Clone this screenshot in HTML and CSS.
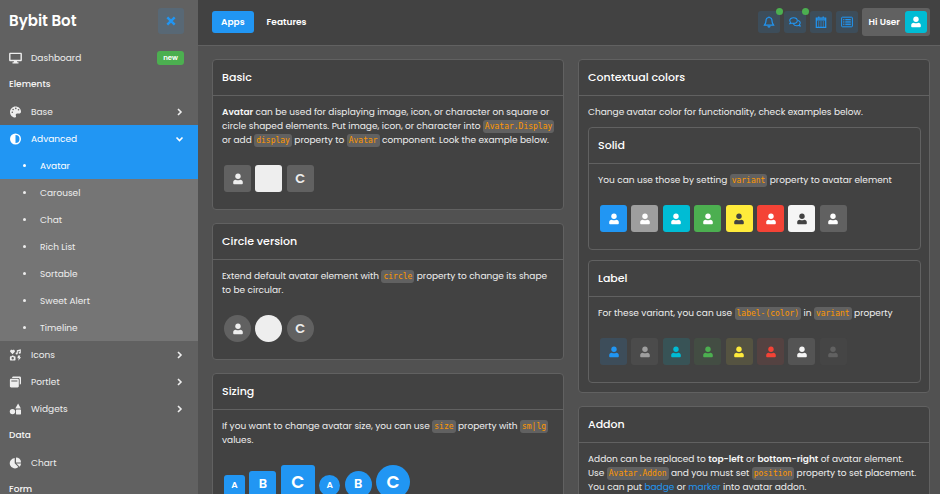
FILE: index.html
```html
<!DOCTYPE html>
<html lang="en">
<head>
    <meta charset="UTF-8">
    <meta name="viewport" content="width=device-width, initial-scale=1.0">
    <title>Bybit Bot - Avatar</title>
    <link rel="stylesheet" href="styles.css">
</head>
<body>

    <!-- Icon shapes shared by the whole page -->
    <svg class="icon-defs" aria-hidden="true">
        <symbol id="i-user" viewBox="0 0 12 12">
            <circle cx="6" cy="3.2" r="2.700"/>
            <path d="M3.800 6.700c.7.400 1.400.500 2.200.500s1.500-.1 2.200-.5c1.600 0 2.600 1.100 2.600 2.600v.9c0 .7-.5 1.100-1.100 1.100H2.300c-.6 0-1.100-.4-1.100-1.100v-.9c0-1.500 1-2.600 2.600-2.600z"/>
        </symbol>
        <symbol id="i-close" viewBox="0 0 12 12">
            <path d="M2.300 2.300l7.400 7.400M9.700 2.300l-7.400 7.400" fill="none" stroke="currentColor" stroke-width="2.400"/>
        </symbol>
        <symbol id="i-right" viewBox="0 0 12 12">
            <path d="M4.500 3L7.500 6l-3 3" fill="none" stroke="currentColor" stroke-width="1.600"/>
        </symbol>
        <symbol id="i-down" viewBox="0 0 12 12">
            <path d="M3 4.500L6 7.500l3-3" fill="none" stroke="currentColor" stroke-width="1.600"/>
        </symbol>
        <symbol id="i-desktop" viewBox="0 0 13 12">
            <path d="M1.400.7h10.200c.8 0 1.300.5 1.300 1.300v6c0 .8-.5 1.300-1.300 1.300H8l.3 1h1.200v1.200h-6v-1.200h1.200l.3-1H1.400C.6 9.300.1 8.800.1 8V2C.1 1.200.6.7 1.400.7zM1.500 2.100v5.700h10V2.100z" fill-rule="evenodd"/>
        </symbol>
        <symbol id="i-palette" viewBox="0 0 12 12">
            <path d="M6 .5C2.900.500.5 3 .5 6s2.300 5.500 5 5.500c1 0 1.300-.9.900-1.700-.5-1.100.1-2.200 1.300-2.200h1.900c1.100 0 1.900-.8 1.900-1.900C11.500 2.700 9 .5 6 .5zM2.800 7a.8.8 0 1 1 0-1.600.8.8 0 0 1 0 1.600zm.8-2.700a.8.8 0 1 1 0-1.600.8.8 0 0 1 0 1.600zm2.700-1.100a.8.8 0 1 1 0-1.600.8.8 0 0 1 0 1.600zM9 4.500a.8.8 0 1 1 0-1.600.8.8 0 0 1 0 1.600z" fill-rule="evenodd"/>
        </symbol>
        <symbol id="i-adjust" viewBox="0 0 12 12">
            <path d="M6 .5a5.500 5.500 0 1 1 0 11 5.500 5.500 0 0 1 0-11zM6 2v8a4 4 0 0 0 0-8z" fill-rule="evenodd"/>
        </symbol>
        <symbol id="i-icons" viewBox="0 0 12 12">
            <path d="M3 5.200L.9 3.100C-.2 1.700 1.700-.2 3 1.200 4.300-.2 6.200 1.700 5.100 3.100z"/>
            <path d="M7.300 1.200l4-.9v3.500a1.100 1 0 1 1-1-1V2l-2 .5v2.100a1.100 1 0 1 1-1-1z"/>
            <path d="M1 7.300h1.100l.4-.7h1.400l.4.7h1.100c.4 0 .6.2.6.6v2.900c0 .4-.2.6-.6.600H1c-.4 0-.6-.2-.6-.6V7.900c0-.4.200-.6.600-.6zm2.200.8a1.200 1.200 0 1 0 0 2.400 1.200 1.200 0 0 0 0-2.400z" fill-rule="evenodd"/>
            <path d="M8.500 6.500h2.300l-.6 1.700h1.400L8.700 11.800l.6-2.500H7.900z"/>
        </symbol>
        <symbol id="i-portlet" viewBox="0 0 12 12">
            <path d="M3.800.5h6.400c.7 0 1.300.6 1.300 1.300v5.400c0 .8-.6 1.300-1.300 1.300V3.300c0-.8-.6-1.400-1.400-1.400H2.600C2.600 1.100 3.100.5 3.800.5z"/>
            <path d="M1.600 2.700h6.500c.7 0 1.200.5 1.200 1.200v6.400c0 .7-.5 1.200-1.200 1.200H1.600c-.7 0-1.200-.5-1.200-1.200V3.900c0-.7.5-1.200 1.200-1.200zm.2 1.700v1.200h6.100V4.400z" fill-rule="evenodd"/>
        </symbol>
        <symbol id="i-shapes" viewBox="0 0 12 12">
            <path d="M8.600.4l2.800 5.100H5.800z"/>
            <circle cx="3" cy="8.600" r="2.700"/>
            <rect x="6.500" y="6.400" width="5" height="5" rx=".6"/>
        </symbol>
        <symbol id="i-pie" viewBox="0 0 12 12">
            <path d="M5.200 1v5.300l3.700 3.800A5.200 5.200 0 1 1 5.200 1z"/>
            <path d="M6.500.4a5 5 0 0 1 5 5h-5z"/>
            <path d="M6.900 6.600h4.700a5 5 0 0 1-1.500 3.200z"/>
        </symbol>
        <symbol id="i-bell" viewBox="0 0 12 12">
            <path d="M6 .4v1M6 1.500C4 1.500 3 3 3 4.800 3 7.200 2 8 1.400 9.100h9.200C10 8 9 7.200 9 4.800 9 3 8 1.500 6 1.500zM4.900 10.200c.2 1.100 2 1.100 2.200 0" fill="none" stroke="currentColor" stroke-width="1.200"/>
        </symbol>
        <symbol id="i-comments" viewBox="0 0 14 12">
            <path d="M5.300 1C2.800 1 .9 2.400.9 4.300c0 .8.400 1.500.9 2L.9 8c.9 0 1.700-.3 2.300-.7.6.200 1.300.3 2.100.3 2.500 0 4.400-1.400 4.400-3.300S7.800 1 5.300 1z" fill="none" stroke="currentColor" stroke-width="1.200"/>
            <path d="M10.600 4.300c1.500.4 2.500 1.400 2.500 2.700 0 .8-.4 1.400-.9 1.900l.9 1.700c-.9 0-1.700-.2-2.300-.6-2.300.6-4.700-.1-5.600-1.800" fill="none" stroke="currentColor" stroke-width="1.200"/>
        </symbol>
        <symbol id="i-calendar" viewBox="0 0 12 12">
            <path d="M1.300 2.200h9.400v9.200H1.300zM1.300 3.800h9.400M3.800.4v2M8.200.4v2" fill="none" stroke="currentColor" stroke-width="1.200"/>
            <path d="M3 6h6M3 8h6M3 10h6" fill="none" stroke="currentColor" stroke-dasharray="1.200 1.200"/>
        </symbol>
        <symbol id="i-list" viewBox="0 0 12 12">
            <rect x=".6" y="1.200" width="10.800" height="9.600" rx=".8" fill="none" stroke="currentColor"/>
            <path d="M2.200 3.500h1.200M4.300 3.500h5.500M2.200 5.200h1.200M4.300 5.200h5.500M2.200 6.900h1.200M4.300 6.900h5.500M2.200 8.600h1.200M4.300 8.600h5.500" stroke="currentColor"/>
        </symbol>
    </svg>

    <!-- Sidebar -->
    <aside class="sidebar">
        <div class="sidebar-header">
            <h1 class="brand">Bybit Bot</h1>
            <button class="close-btn" type="button" aria-label="Close menu"><svg class="icon"><use href="#i-close"/></svg></button>
        </div>
        <nav class="menu">
            <a class="menu-link" href="#"><svg class="icon"><use href="#i-desktop"/></svg><span>Dashboard</span><span class="badge">new</span></a>
            <div class="menu-section">Elements</div>
            <a class="menu-link" href="#"><svg class="icon"><use href="#i-palette"/></svg><span>Base</span><svg class="icon caret"><use href="#i-right"/></svg></a>
            <a class="menu-link active" href="#"><svg class="icon"><use href="#i-adjust"/></svg><span>Advanced</span><svg class="icon caret"><use href="#i-down"/></svg></a>
            <div class="submenu">
                <a class="submenu-link active" href="#">Avatar</a>
                <a class="submenu-link" href="#">Carousel</a>
                <a class="submenu-link" href="#">Chat</a>
                <a class="submenu-link" href="#">Rich List</a>
                <a class="submenu-link" href="#">Sortable</a>
                <a class="submenu-link" href="#">Sweet Alert</a>
                <a class="submenu-link" href="#">Timeline</a>
            </div>
            <a class="menu-link" href="#"><svg class="icon"><use href="#i-icons"/></svg><span>Icons</span><svg class="icon caret"><use href="#i-right"/></svg></a>
            <a class="menu-link" href="#"><svg class="icon"><use href="#i-portlet"/></svg><span>Portlet</span><svg class="icon caret"><use href="#i-right"/></svg></a>
            <a class="menu-link" href="#"><svg class="icon"><use href="#i-shapes"/></svg><span>Widgets</span><svg class="icon caret"><use href="#i-right"/></svg></a>
            <div class="menu-section">Data</div>
            <a class="menu-link" href="#"><svg class="icon"><use href="#i-pie"/></svg><span>Chart</span></a>
            <div class="menu-section">Form</div>
        </nav>
    </aside>

    <div class="page">
        <!-- Top bar -->
        <header class="topbar">
            <nav class="tabs">
                <a class="tab active" href="#">Apps</a>
                <a class="tab" href="#">Features</a>
            </nav>
            <div class="tools">
                <button class="tool-btn" type="button" aria-label="Notifications"><svg class="icon"><use href="#i-bell"/></svg><span class="dot"></span></button>
                <button class="tool-btn" type="button" aria-label="Messages"><svg class="icon"><use href="#i-comments"/></svg><span class="dot"></span></button>
                <button class="tool-btn" type="button" aria-label="Calendar"><svg class="icon"><use href="#i-calendar"/></svg></button>
                <button class="tool-btn" type="button" aria-label="Activity"><svg class="icon"><use href="#i-list"/></svg></button>
                <button class="user-btn" type="button">Hi User <span class="user-pic"><svg class="icon"><use href="#i-user"/></svg></span></button>
            </div>
        </header>

        <main class="content">
            <div class="column">
                <section class="card">
                    <h2 class="card-title">Basic</h2>
                    <div class="card-body">
                        <p><strong>Avatar</strong> can be used for displaying image, icon, or character on square or circle shaped elements. Put image, icon, or character into <code>Avatar.Display</code> or add <code>display</code> property to <code>Avatar</code> component. Look the example below.</p>
                        <div class="avatars">
                            <span class="avatar"><svg class="icon"><use href="#i-user"/></svg></span>
                            <span class="avatar image"></span>
                            <span class="avatar">C</span>
                        </div>
                    </div>
                </section>

                <section class="card">
                    <h2 class="card-title">Circle version</h2>
                    <div class="card-body">
                        <p>Extend default avatar element with <code>circle</code> property to change its shape to be circular.</p>
                        <div class="avatars">
                            <span class="avatar circle"><svg class="icon"><use href="#i-user"/></svg></span>
                            <span class="avatar circle image"></span>
                            <span class="avatar circle">C</span>
                        </div>
                    </div>
                </section>

                <section class="card">
                    <h2 class="card-title">Sizing</h2>
                    <div class="card-body">
                        <p>If you want to change avatar size, you can use <code>size</code> property with <code>sm|lg</code> values.</p>
                        <div class="avatars sizes">
                            <span class="avatar primary sm">A</span>
                            <span class="avatar primary">B</span>
                            <span class="avatar primary lg">C</span>
                            <span class="avatar primary circle sm">A</span>
                            <span class="avatar primary circle">B</span>
                            <span class="avatar primary circle lg">C</span>
                        </div>
                    </div>
                </section>
            </div>

            <div class="column">
                <section class="card">
                    <h2 class="card-title">Contextual colors</h2>
                    <div class="card-body nested">
                        <p>Change avatar color for functionality, check examples below.</p>
                        <section class="card">
                            <h2 class="card-title">Solid</h2>
                            <div class="card-body">
                                <p>You can use those by setting <code>variant</code> property to avatar element</p>
                                <div class="avatars">
                                    <span class="avatar primary"><svg class="icon"><use href="#i-user"/></svg></span>
                                    <span class="avatar secondary"><svg class="icon"><use href="#i-user"/></svg></span>
                                    <span class="avatar info"><svg class="icon"><use href="#i-user"/></svg></span>
                                    <span class="avatar success"><svg class="icon"><use href="#i-user"/></svg></span>
                                    <span class="avatar warning"><svg class="icon"><use href="#i-user"/></svg></span>
                                    <span class="avatar danger"><svg class="icon"><use href="#i-user"/></svg></span>
                                    <span class="avatar light"><svg class="icon"><use href="#i-user"/></svg></span>
                                    <span class="avatar dark"><svg class="icon"><use href="#i-user"/></svg></span>
                                </div>
                            </div>
                        </section>
                        <section class="card">
                            <h2 class="card-title">Label</h2>
                            <div class="card-body">
                                <p>For these variant, you can use <code>label-(color)</code> in <code>variant</code> property</p>
                                <div class="avatars">
                                    <span class="avatar label-primary"><svg class="icon"><use href="#i-user"/></svg></span>
                                    <span class="avatar label-secondary"><svg class="icon"><use href="#i-user"/></svg></span>
                                    <span class="avatar label-info"><svg class="icon"><use href="#i-user"/></svg></span>
                                    <span class="avatar label-success"><svg class="icon"><use href="#i-user"/></svg></span>
                                    <span class="avatar label-warning"><svg class="icon"><use href="#i-user"/></svg></span>
                                    <span class="avatar label-danger"><svg class="icon"><use href="#i-user"/></svg></span>
                                    <span class="avatar label-light"><svg class="icon"><use href="#i-user"/></svg></span>
                                    <span class="avatar label-dark"><svg class="icon"><use href="#i-user"/></svg></span>
                                </div>
                            </div>
                        </section>
                    </div>
                </section>

                <section class="card">
                    <h2 class="card-title">Addon</h2>
                    <div class="card-body">
                        <p>Addon can be replaced to <strong>top-left</strong> or <strong>bottom-right</strong> of avatar element. Use <code>Avatar.Addon</code> and you must set <code>position</code> property to set placement. You can put <a href="#">badge</a> or <a href="#">marker</a> into avatar addon.</p>
                    </div>
                </section>
            </div>
        </main>
    </div>

</body>
</html>
```

FILE: styles.css
```css
* {
    box-sizing: border-box;
}

body {
    margin: 0;
    display: flex;
    height: 100vh;
    overflow: hidden;
    background-color: #515151;
    color: #eeeeee;
    font-family: Poppins, Inter, sans-serif;
    font-size: 9px;
    line-height: 14px;
}

h1, h2, p {
    margin: 0;
}

a {
    color: #2196f3;
    text-decoration: none;
}

button {
    border: none;
    padding: 0;
    font: inherit;
    cursor: pointer;
}

strong {
    font-weight: 600;
    color: #f5f5f5;
}

code {
    padding: 2px;
    border-radius: 3px;
    background-color: #616161;
    color: #ff9800;
    font-family: "DejaVu Sans Mono", monospace;
    font-size: 8px;
    line-height: 1; /* keeps the chips from stretching the text lines */
}

.icon-defs {
    display: none;
}

.icon {
    width: 12px;
    height: 12px;
    flex: none;
    fill: currentColor;
}

/* Sidebar */
.sidebar {
    width: 198px;
    flex: none;
    overflow: hidden;
    background-color: #616161;
}

.sidebar-header {
    display: flex;
    align-items: center;
    justify-content: space-between;
    height: 44px;
    padding: 0 14px 2px 9px;
}

.brand {
    color: #ffffff;
    font-size: 15px;
    font-weight: 600;
}

.close-btn {
    display: flex;
    align-items: center;
    justify-content: center;
    width: 26px;
    height: 26px;
    border-radius: 3px;
    background-color: rgba(33, 150, 243, 0.14);
    color: #2196f3;
}

.menu-link {
    display: flex;
    align-items: center;
    gap: 9px;
    height: 27px;
    padding: 0 12px 0 9px;
    color: #eeeeee;
}

.menu-link .icon {
    width: 13px;
}

.menu-section {
    height: 27px;
    padding: 0 9px;
    color: #f5f5f5;
    font-weight: 500;
    line-height: 27px;
}

.menu-link.active,
.submenu-link.active {
    background-color: #2196f3;
    color: #ffffff;
}

.menu-link .caret {
    margin-left: auto;
}

.badge {
    margin-left: auto;
    margin-right: 2px;
    padding: 0 6px;
    border-radius: 3px;
    background-color: #4caf50;
    color: #ffffff;
    font-size: 7px;
    font-weight: 600;
}

.submenu {
    background-color: #757575;
}

.submenu-link {
    display: flex;
    align-items: center;
    gap: 14px;
    height: 27px;
    padding-left: 23px;
    color: #eeeeee;
}

.submenu-link::before {
    content: "";
    width: 3px;
    height: 3px;
    border-radius: 50%;
    background-color: currentColor;
}

/* Page */
.page {
    flex: 1;
    min-width: 0;
}

.topbar {
    display: flex;
    align-items: center;
    justify-content: space-between;
    height: 46px;
    padding: 0 10px 2px 14px;
    border-bottom: 1px solid #616161;
    background-color: #424242;
}

.tabs,
.tools {
    display: flex;
    align-items: center;
    gap: 4px;
}

.tab {
    padding: 4px 9px;
    border-radius: 3px;
    color: #ffffff;
    font-weight: 600;
}

.tab.active {
    background-color: #2196f3;
}

.tool-btn {
    position: relative;
    display: flex;
    align-items: center;
    justify-content: center;
    width: 22px;
    height: 22px;
    border-radius: 3px;
    background-color: rgba(33, 150, 243, 0.14);
    color: #2196f3;
}

.dot {
    position: absolute;
    top: -3px;
    right: -3px;
    width: 7px;
    height: 7px;
    border-radius: 50%;
    background-color: #4caf50;
}

.user-btn {
    display: flex;
    align-items: center;
    gap: 5px;
    padding: 3px 3px 3px 7px;
    border-radius: 3px;
    background-color: #616161;
    color: #ffffff;
    font-weight: 600;
}

.user-pic {
    display: flex;
    align-items: center;
    justify-content: center;
    width: 22px;
    height: 22px;
    border-radius: 3px;
    background-color: #00bcd4;
}

.content {
    display: grid;
    grid-template-columns: 1fr 1fr;
    align-items: start;
    gap: 14px;
    padding: 13px 10px 13px 14px;
}

.column {
    display: grid;
    gap: 13px;
}

/* Cards */
.card {
    border: 1px solid #616161;
    border-radius: 4px;
    background-color: #424242;
}

.card-title {
    padding: 10px 9px 11px;
    border-bottom: 1px solid #616161;
    color: #ffffff;
    font-size: 11px;
    font-weight: 500;
    line-height: 14px;
}

.card-body {
    padding: 9px 8px 17px 9px;
}

.nested {
    padding-bottom: 9px;
}

.nested .card {
    margin-top: 8px;
}

.nested .card + .card {
    margin-top: 10px;
}

/* Avatars */
.avatars {
    margin-top: 18px;
    padding-left: 1px;
}

.avatar {
    display: inline-flex;
    align-items: center;
    justify-content: center;
    width: 27px;
    height: 27px;
    margin: 0 1px;
    border-radius: 3px;
    background-color: #616161;
    color: #eeeeee;
    font-size: 13px;
    font-weight: 600;
    vertical-align: top;
}

.sizes .avatar {
    vertical-align: baseline;
}

.avatar.sm {
    width: 21px;
    height: 21px;
    font-size: 9px;
}

.avatar.lg {
    width: 34px;
    height: 34px;
    font-size: 17px;
}

.avatar.circle {
    border-radius: 50%;
}

.avatar.image {
    background-color: #eeeeee;
}

.avatar.primary { background-color: #2196f3; color: #ffffff; }
.avatar.secondary { background-color: #9e9e9e; color: #ffffff; }
.avatar.info { background-color: #00bcd4; color: #ffffff; }
.avatar.success { background-color: #4caf50; color: #ffffff; }
.avatar.warning { background-color: #ffeb3b; color: #424242; }
.avatar.danger { background-color: #f44336; color: #ffffff; }
.avatar.light { background-color: #f5f5f5; color: #424242; }
.avatar.dark { background-color: #616161; color: #ffffff; }

.avatar.label-primary { background-color: rgba(33, 150, 243, 0.14); color: #2196f3; }
.avatar.label-secondary { background-color: rgba(158, 158, 158, 0.1); color: #9e9e9e; }
.avatar.label-info { background-color: rgba(0, 188, 212, 0.14); color: #00bcd4; }
.avatar.label-success { background-color: rgba(76, 175, 80, 0.1); color: #4caf50; }
.avatar.label-warning { background-color: rgba(255, 235, 59, 0.1); color: #ffeb3b; }
.avatar.label-danger { background-color: rgba(244, 67, 54, 0.1); color: #f44336; }
.avatar.label-light { background-color: rgba(245, 245, 245, 0.1); color: #f5f5f5; }
.avatar.label-dark { background-color: rgba(97, 97, 97, 0.1); color: #616161; }
```
